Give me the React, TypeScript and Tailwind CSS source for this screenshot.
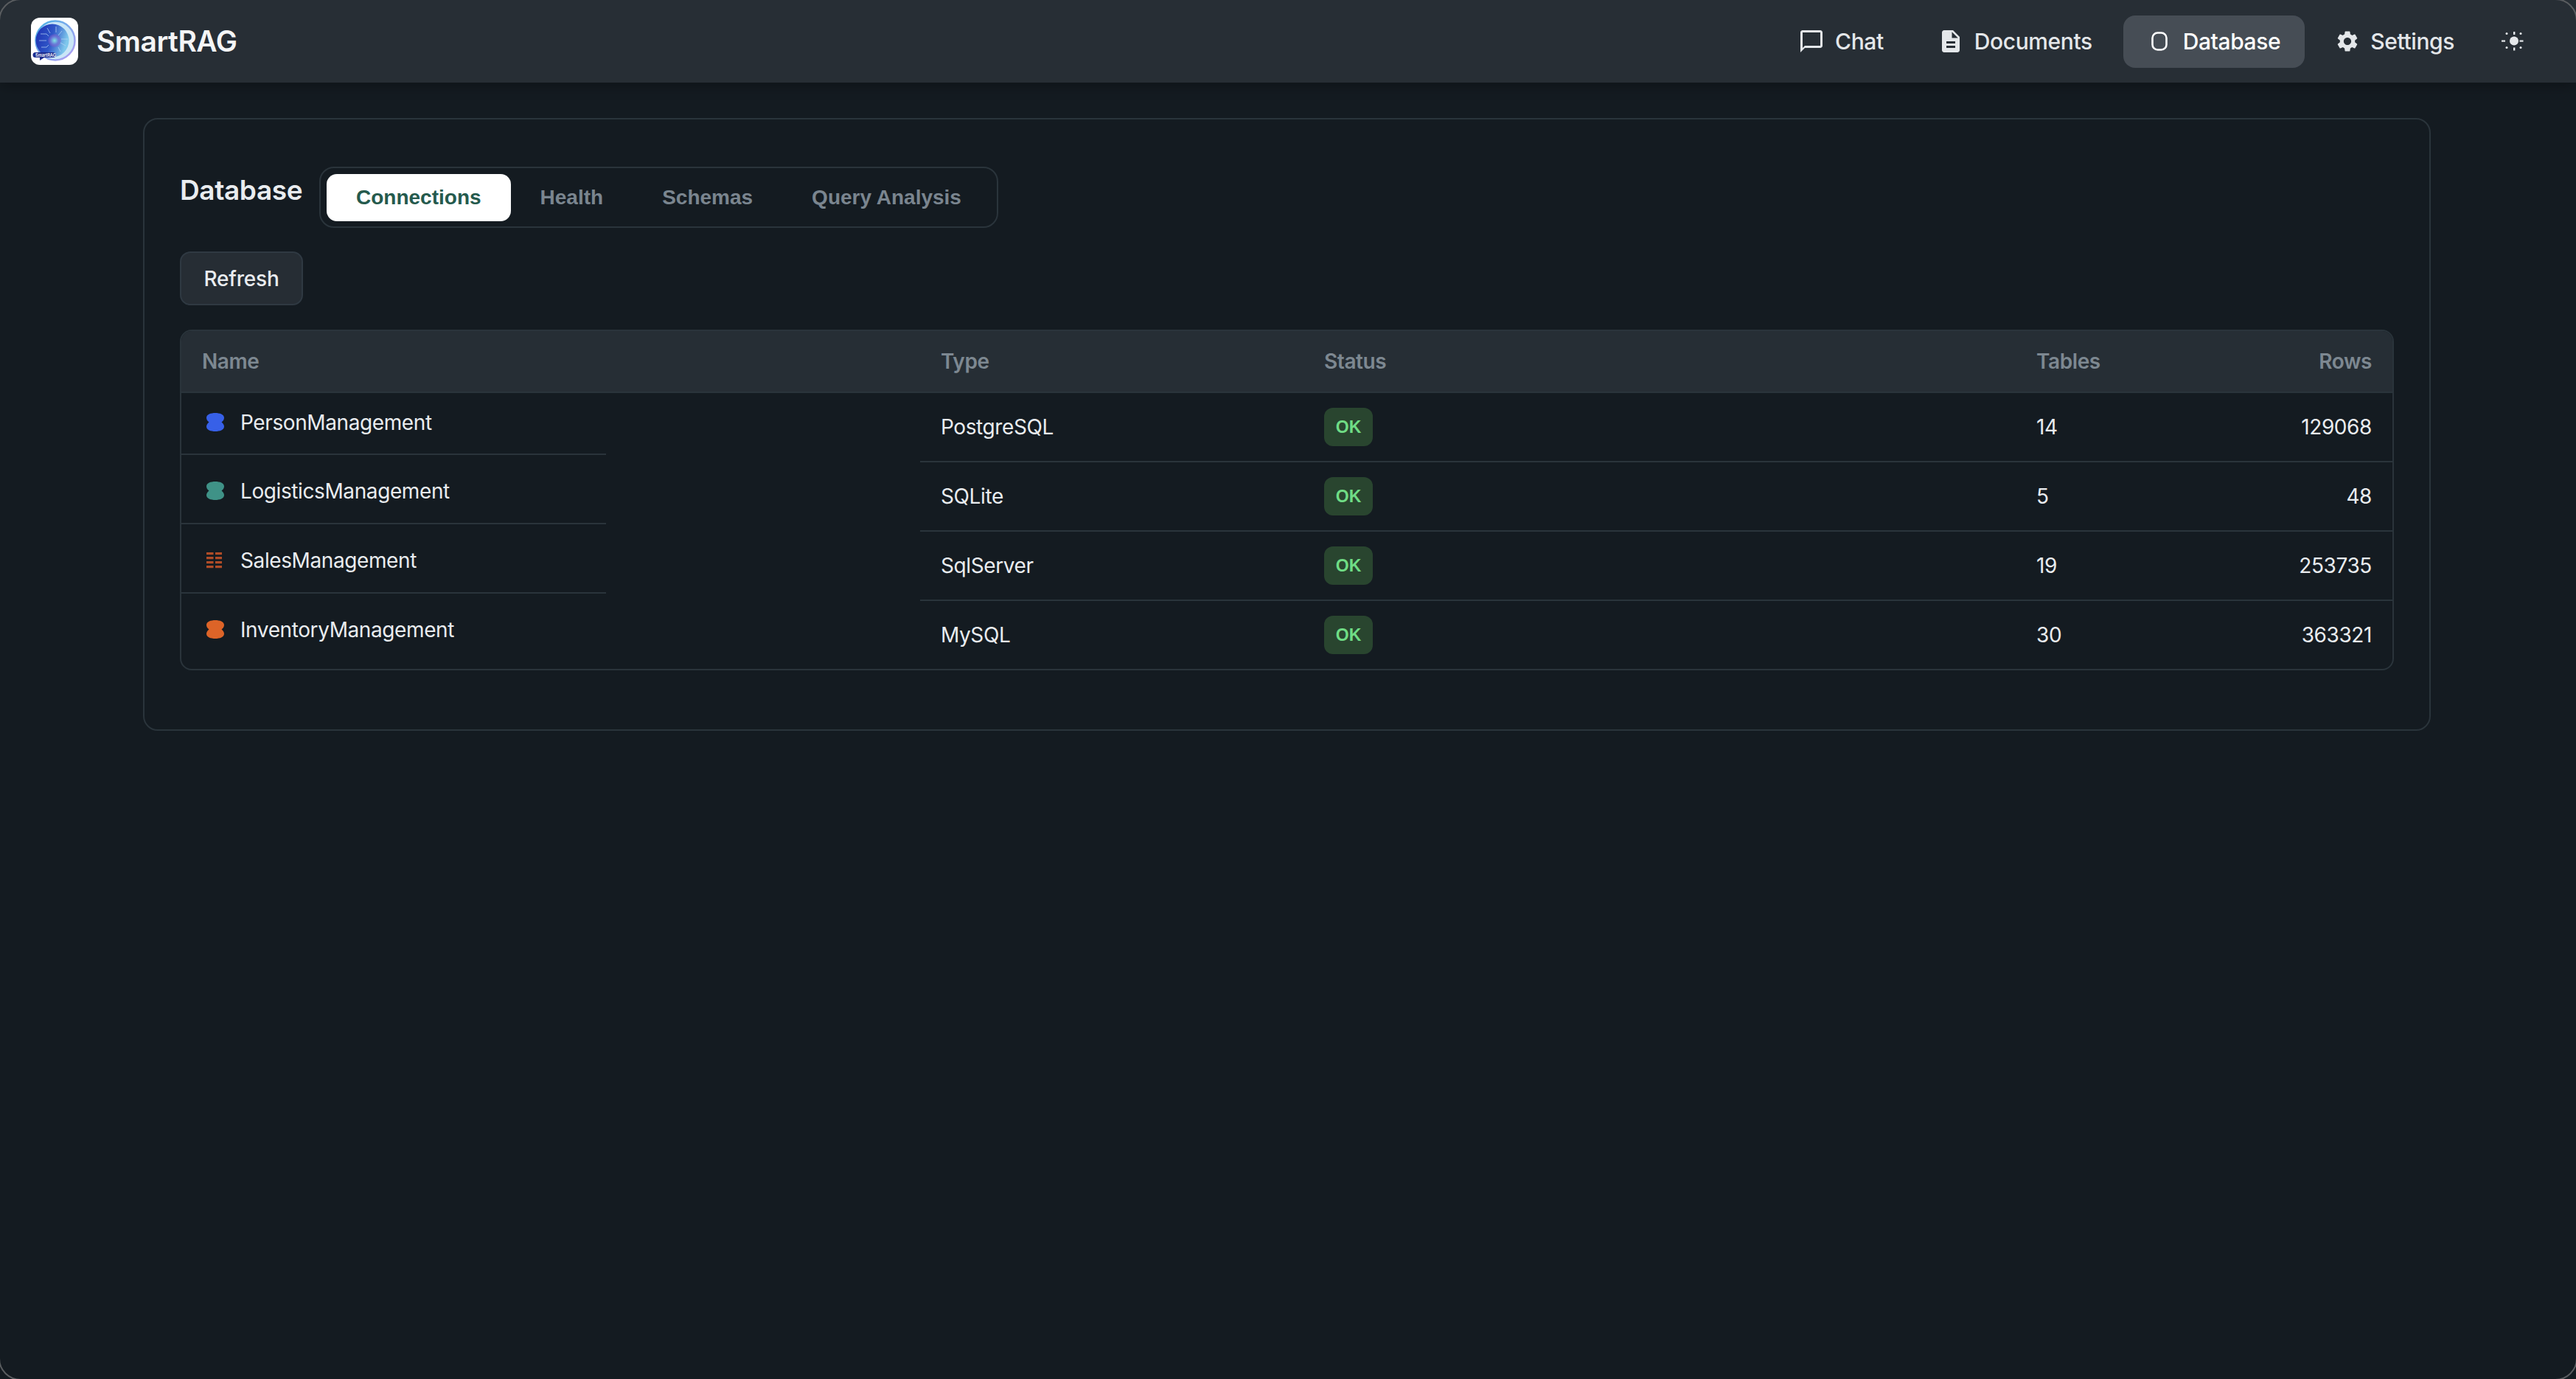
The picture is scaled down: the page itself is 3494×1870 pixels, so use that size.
import React from "react";
import { MdChatBubbleOutline, MdDescription, MdSettings } from "react-icons/md";

const Blob = ({ color }: { color: string }) => (
  <svg width="24" height="25" viewBox="0 0 24 25" className="shrink-0">
    <path
      fill={color}
      d="M12 0C18 0 24 2 24 6.5C24 9 22.5 11 20.5 12.5C22.5 14 24 16 24 18.5C24 23 18 25 12 25C6 25 0 23 0 18.5C0 16 1.5 14 3.5 12.5C1.5 11 0 9 0 6.5C0 2 6 0 12 0Z"
    />
  </svg>
);

const Bars = () => (
  <svg width="24" height="25" viewBox="0 0 24 25" className="shrink-0" fill="#b04c27">
    {[2, 8, 14, 20].map((y) => (
      <g key={y}>
        <rect x="0" y={y} width="9.5" height="3.2" />
        <rect x="12" y={y} width="9" height="3.2" />
      </g>
    ))}
  </svg>
);

const names = [
  { n: "PersonManagement", icon: <Blob color="#3760e8" /> },
  { n: "LogisticsManagement", icon: <Blob color="#3f9287" /> },
  { n: "SalesManagement", icon: <Bars /> },
  { n: "InventoryManagement", icon: <Blob color="#dd6428" /> },
];
const rows = [
  ["PostgreSQL", "14", "129068"],
  ["SQLite", "5", "48"],
  ["SqlServer", "19", "253735"],
  ["MySQL", "30", "363321"],
];

const Nav = ({ label, icon }: { label: string; icon: React.ReactNode }) => (
  <div className="flex items-center h-[71px] text-[30px] font-medium text-[#e4e7ea] tracking-[-0.4px]">
    {icon}
    <span className="whitespace-nowrap">{label}</span>
  </div>
);

export default function App() {
  return (
    <div
      className="relative w-[3494px] h-[1870px] bg-[#141b21] overflow-hidden flex flex-col"
      style={{ fontFamily: '"Inter", sans-serif' }}
    >
      <header className="h-[112px] shrink-0 bg-[#272e35] flex items-center justify-between pl-[42px] pr-[71px] shadow-[0_6px_16px_rgba(0,0,0,0.25)] relative z-10">
        <div className="flex items-center gap-[25px]">
          <div className="w-[64px] h-[64px] rounded-[12px] bg-white flex items-center justify-center">
            <svg width="64" height="64" viewBox="0 0 64 64">
              <defs>
                <linearGradient id="ring" x1="0" y1="0" x2="1" y2="1">
                  <stop offset="0" stopColor="#49b4e6" />
                  <stop offset="1" stopColor="#b59cf2" />
                </linearGradient>
                <linearGradient id="disc" x1="0" y1="0" x2="1" y2="0.3">
                  <stop offset="0" stopColor="#1d2fb0" />
                  <stop offset="0.55" stopColor="#2f57c8" />
                  <stop offset="1" stopColor="#7fc8ec" />
                </linearGradient>
                <radialGradient id="core">
                  <stop offset="0" stopColor="#7fe6e4" />
                  <stop offset="0.55" stopColor="#6a7fd8" />
                  <stop offset="1" stopColor="#8a4fc8" stopOpacity="0.2" />
                </radialGradient>
              </defs>
              <circle cx="33" cy="31" r="26.5" fill="#c9e6f7" stroke="url(#ring)" strokeWidth="2.5" />
              <circle cx="29" cy="31" r="22.5" fill="url(#disc)" />
              <circle cx="32" cy="31" r="9" fill="url(#core)" />
              <g stroke="#bcd8f7" strokeWidth="0.7" fill="none">
                <path d="M13 22h8l3 3M11 31h10M14 40h7l3-3M34 12v8M42 18l-5 6M50 29h-9M47 38l-7-4M22 14l4 7M40 46l-3-6" />
              </g>
              <path d="M6 47h24a3.5 3.5 0 0 1 0 7H18l-6 4v-4H6a3.5 3.5 0 0 1 0-7Z" fill="#1c2a8c" />
              <text x="6" y="52.5" fontSize="5.6" fill="#ffffff" fontFamily="Inter, sans-serif" fontWeight="600">
                SmartRAG
              </text>
            </svg>
          </div>
          <span className="text-[39px] font-semibold text-[#f4f5f6] tracking-[-0.5px]">SmartRAG</span>
        </div>
        <nav className="flex items-center">
          <div className="mr-[79px]">
            <Nav
              label="Chat"
              icon={
                <span className="w-[47px] shrink-0">
                  <MdChatBubbleOutline size={36} color="#e4e7ea" className="-ml-[3px]" />
                </span>
              }
            />
          </div>
          <div className="mr-[42px]">
            <Nav
              label="Documents"
              icon={
                <span className="w-[44px] shrink-0">
                  <MdDescription size={36} color="#e4e7ea" className="-ml-[6px]" />
                </span>
              }
            />
          </div>
          <div className="mr-[44px] bg-[#464d55] rounded-[16px] pl-[38px] pr-[33px] h-[71px] flex items-center text-[30px] font-medium text-white tracking-[-0.4px]">
            <svg width="22" height="26" viewBox="0 0 22 26" fill="none" stroke="#ffffff" strokeWidth="2.6" className="mr-[21px] shrink-0">
              <rect x="1.5" y="1.5" width="19" height="23" rx="7" />
            </svg>
            <span className="whitespace-nowrap">Database</span>
          </div>
          <div className="mr-[64px]">
            <Nav
              label="Settings"
              icon={
                <span className="w-[45px] shrink-0">
                  <MdSettings size={34} color="#e4e7ea" className="-ml-[3px]" />
                </span>
              }
            />
          </div>
          <svg width="30" height="26" viewBox="0 0 30 26" fill="#e4e7ea">
            <circle cx="17" cy="12.5" r="6" />
            <rect x="16" y="0" width="2.4" height="4" />
            <rect x="16" y="21.5" width="2.4" height="4" />
            <rect x="0" y="11.5" width="5" height="2.2" />
            <rect x="24.5" y="11.5" width="5" height="2.2" />
            <circle cx="7" cy="2.5" r="1.5" />
            <circle cx="26" cy="2.5" r="1.5" />
            <circle cx="7" cy="21.5" r="1.5" />
            <circle cx="26" cy="21.5" r="1.5" />
          </svg>
        </nav>
      </header>

      <main className="pl-[194px] pt-[48px]">
        <section className="w-[3103px] h-[831px] border-2 border-[#2a343b] rounded-[20px] pl-[48px] pr-[48px] pt-[64px]">
          <div className="flex items-start gap-[25px]">
            <h1 className="w-[164px] text-[37px] font-semibold text-[#e9ecef] leading-[44px] mt-[10px] whitespace-nowrap tracking-[-0.4px]">
              Database
            </h1>
            <div className="flex items-center h-[83px] border-2 border-[#2a343b] rounded-[20px] pl-[8px] pr-[8px]">
              {["Connections", "Health", "Schemas", "Query Analysis"].map((t, i) => (
                <div
                  key={t}
                  className={`h-[64px] px-[40px] flex items-center rounded-[14px] text-[28px] font-bold ${
                    i === 0 ? "bg-white text-[#255a4d]" : "text-[#7a858f]"
                  }`}
                  style={{ fontFamily: '"Liberation Sans", sans-serif' }}
                >
                  {t}
                </div>
              ))}
            </div>
          </div>
          <button className="mt-[32px] w-[167px] h-[73px] bg-[#262d34] border-2 border-[#2f3942] rounded-[14px] text-[28px] font-medium text-[#e9ecef] tracking-[-0.2px] block">
            Refresh
          </button>
          <div className="mt-[33px] border-2 border-[#2a343b] rounded-[16px] overflow-hidden text-[28px] text-[#e9ecef] tracking-[-0.4px]">
            <div className="h-[84px] bg-[#262e35] border-b-2 border-[#2a343b] flex items-center text-[#7d8891] font-semibold">
              <div className="w-[1030px] pl-[28px]">Name</div>
              <div className="w-[520px]">Type</div>
              <div className="w-[966px]">Status</div>
              <div className="flex-1">Tables</div>
              <div className="pr-[28px]">Rows</div>
            </div>
            <div className="flex">
              <div className="w-[1002px] shrink-0">
                {names.map((x, i) => (
                  <div
                    key={x.n}
                    className={`w-[576px] pl-[34px] ${
                      ["h-[84px] pt-[27px]", "h-[94px] pt-[36px]", "h-[94px] pt-[36px]", "h-[102px] pt-[36px]"][i]
                    } ${i < 3 ? "border-b-2 border-[#2a343b]" : ""}`}
                  >
                    <div className="h-[25px] flex items-center gap-[22px]">
                      {x.icon}
                      <span>{x.n}</span>
                    </div>
                  </div>
                ))}
              </div>
              <div className="flex-1">
                {rows.map((r, i) => (
                  <div
                    key={r[0]}
                    className={`flex items-center ${i < 3 ? "h-[94px] border-b-2 border-[#2a343b]" : "h-[92px]"}`}
                  >
                    <div className="w-[548px] pl-[28px]">{r[0]}</div>
                    <div className="w-[966px]">
                      <span
                        className="w-[66px] h-[52px] rounded-[12px] bg-[#29452f] text-[#6fdc85] text-[23px] font-bold flex items-center justify-center tracking-normal"
                        style={{ fontFamily: '"Liberation Sans", sans-serif' }}
                      >
                        OK
                      </span>
                    </div>
                    <div className="flex-1">{r[1]}</div>
                    <div className="pr-[28px]">{r[2]}</div>
                  </div>
                ))}
              </div>
            </div>
          </div>
        </section>
      </main>
      <div className="absolute -inset-[2px] rounded-[30px] border-2 border-[#5a5d60] pointer-events-none z-20" />
    </div>
  );
}
